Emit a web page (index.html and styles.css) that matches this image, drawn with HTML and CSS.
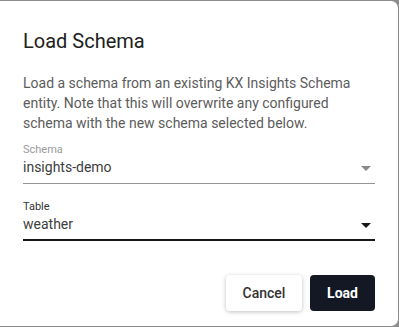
FILE: index.html
```html
<!DOCTYPE html>
<html lang="en">

<head>
    <meta charset="UTF-8">
    <meta name="viewport" content="width=device-width, initial-scale=1.0">
    <title>Load Schema</title>
    <link rel="stylesheet" href="styles.css">
</head>

<body>
    <div class="dialog">
        <h2 class="dialog-title">Load Schema</h2>
        <p class="dialog-text">Load a schema from an existing KX Insights Schema entity. Note that this will overwrite any configured schema with the new schema selected below.</p>

        <div class="field">
            <label class="field-label">Schema</label>
            <div class="field-select">
                <span class="field-value">insights-demo</span>
                <span class="arrow"></span>
            </div>
        </div>

        <div class="field field-active">
            <label class="field-label">Table</label>
            <div class="field-select">
                <span class="field-value">weather</span>
                <span class="arrow"></span>
            </div>
        </div>

        <div class="dialog-actions">
            <button class="btn btn-cancel">Cancel</button>
            <button class="btn btn-load">Load</button>
        </div>
    </div>
</body>

</html>
```

FILE: styles.css
```css
body {
    font-family: 'Roboto', 'Liberation Sans', sans-serif;
    background-color: #8c8c8c;
    margin: 0;
    padding: 1px 0 0 0;
    height: 326px;
    overflow: hidden;
}

.dialog {
    background: #fff;
    width: 398px;
    height: 325px;
    box-sizing: border-box;
    padding: 28px 23px 0 23px;
    border-radius: 0 7px 7px 0;
}

.dialog-title {
    margin: 0;
    font-size: 20px;
    line-height: 24px;
    font-weight: 400;
    color: #212121;
}

.dialog-text {
    margin: 20px 0 10px;
    font-size: 14px;
    line-height: 20px;
    color: #5c5c5c;
}

.field {
    margin-bottom: 16px;
}

.field-label {
    display: block;
    font-size: 11px;
    line-height: 14px;
    color: #9a9a9a;
}

.field-select {
    display: flex;
    align-items: center;
    padding-bottom: 6px;
    border-bottom: 1px solid #949494;
}

.field-value {
    flex: 1;
    font-size: 14px;
    line-height: 20px;
    color: #3d3d3d;
}

.arrow {
    width: 0;
    height: 0;
    border-left: 5px solid transparent;
    border-right: 5px solid transparent;
    border-top: 5px solid #8a8a8a;
    margin-right: 4px;
    margin-top: 2px;
}

.field-active .field-label {
    color: #333;
}

.field-active .field-select {
    padding-bottom: 5px;
    border-bottom: 2px solid #15171c;
}

.field-active .arrow {
    border-top-color: #15171c;
}

.dialog-actions {
    display: flex;
    justify-content: flex-end;
    gap: 8px;
    margin-top: 34px;
}

.btn {
    font-family: 'Roboto', 'Liberation Sans', sans-serif;
    font-size: 14px;
    height: 36px;
    border: none;
    border-radius: 4px;
    cursor: pointer;
}

.btn-cancel {
    width: 76px;
    background: #fff;
    color: #333;
    font-weight: 500;
    box-shadow: 0 1px 4px rgba(0, 0, 0, 0.25);
}

.btn-load {
    width: 65px;
    background: #141824;
    color: #fff;
    font-weight: 700;
}
```
